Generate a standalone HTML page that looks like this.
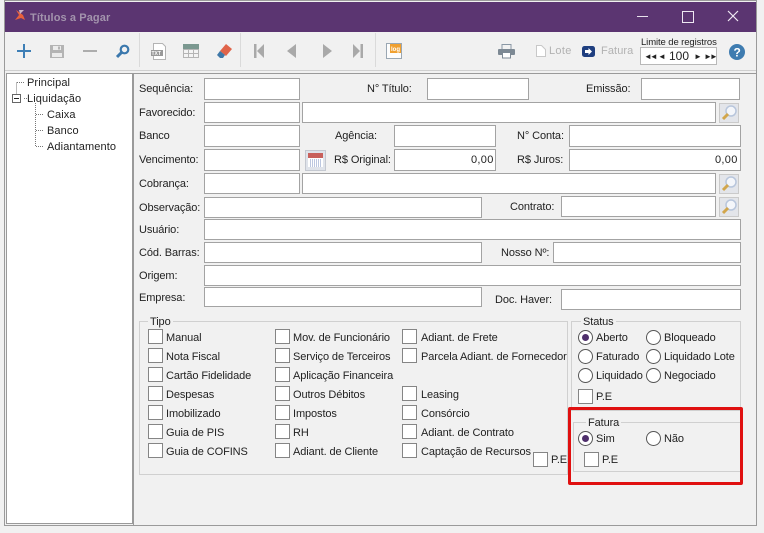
<!DOCTYPE html>
<html lang="pt"><head><meta charset="utf-8"><title>Títulos a Pagar</title>
<style>
html,body{margin:0;padding:0;background:#f1f1f1}
#r{position:relative;width:764px;height:533px;overflow:hidden;background:#f1f1f1;font:11px/14px "Liberation Sans","DejaVu Sans",sans-serif;color:#222}
#r div,#r span,#r svg{position:absolute}
.t{white-space:nowrap;letter-spacing:-.1px;margin-top:1px}
.f{background:#fff;border:1px solid #a3a3a3;box-sizing:border-box}
.c{width:15px;height:15px;background:#fff;border:1px solid #858585;box-sizing:border-box}
.o{width:15px;height:15px;background:#fff;border:1.3px solid #555;border-radius:50%;box-sizing:border-box}
.o.on:after{content:"";position:absolute;left:2.7px;top:2.7px;width:7px;height:7px;border-radius:50%;background:#4f2f6c}
.g{border:1px solid #d0d0d0;box-sizing:border-box}
.m{width:20px;height:20px;background:#e3e5ea;border:1px solid #cacaca;box-sizing:border-box}
.v{width:1px;background:#dadada}
</style></head><body><div id="r">
<div style="left:4px;top:0;width:753px;height:2px;background:#8f8f8f"></div>
<div style="left:4px;top:0;width:753px;height:526px;border:1px solid #9a9a9a;box-sizing:border-box;background:#f1f1f1"></div>
<div style="left:5px;top:2px;width:751px;height:30px;background:#5b3571"></div>
<svg style="left:14px;top:9px" width="12" height="12" viewBox="0 0 12 12"><path d="M2 1 L9 6 L11 11 L7 9 L1 11 L5 6 Z" fill="#e8603c"/><path d="M5 1h5L6 5z" fill="#c9b3c8"/></svg>
<div class="t" style="left:30px;top:10px;color:#a394ad;font-weight:bold;font-size:11px;letter-spacing:.1px">Títulos a Pagar</div>
<div style="left:637px;top:16px;width:11px;height:1px;background:#e8e2ec"></div>
<div style="left:682px;top:11px;width:10px;height:10px;border:1px solid #eee8f2"></div>
<svg style="left:727px;top:10px" width="12" height="12"><path d="M1 1L11 11M11 1L1 11" stroke="#f0eaf4" stroke-width="1.2"/></svg>

<!-- toolbar -->
<svg style="left:16px;top:43px" width="16" height="16"><path d="M8 1v14M1 8h14" stroke="#3e7fb6" stroke-width="2"/></svg>
<svg style="left:50px;top:45px" width="14" height="13"><path d="M0 0h14v13H0z" fill="#b4b4b4"/><path d="M3 1h8v4H3zM2 8h10v4H2z" fill="#ececec"/><path d="M8 1.500h2v3H8z" fill="#b4b4b4"/></svg>
<div style="left:83px;top:50px;width:14px;height:2px;background:#adadad"></div>
<svg style="left:115px;top:44px" width="15" height="15"><circle cx="9.500" cy="5.500" r="3.800" fill="none" stroke="#3b78ad" stroke-width="2.200"/><path d="M6.500 8.500L2 13" stroke="#3b78ad" stroke-width="3"/></svg>
<div class="v" style="left:139px;top:33px;height:34px"></div>
<svg style="left:150px;top:43px" width="17" height="17"><path d="M3.500 .5h9l3 3v13h-12z" fill="#fff" stroke="#b4b4b4"/><rect x="1" y="7" width="12" height="6" fill="#999"/><text x="1.500" y="12" font-size="5" fill="#fff" font-family="Liberation Sans" font-weight="bold">TXT</text></svg>
<svg style="left:183px;top:44px" width="16" height="14"><rect width="16" height="14" fill="#b5b5b5"/><rect width="16" height="5" fill="#7b9890"/><path d="M1 6h4v3H1zM6 6h4v3H6zM11 6h4v3h-4zM1 10h4v3H1zM6 10h4v3H6zM11 10h4v3h-4z" fill="#f4f4f4"/></svg>
<svg style="left:216px;top:44px" width="16" height="15"><path d="M10 0l6 5-6 7-6-5z" fill="#e0644a"/><path d="M4 7l5 4-2 3H4L1 11z" fill="#3f78a8"/></svg>
<div class="v" style="left:240px;top:33px;height:34px"></div>
<svg style="left:254px;top:44px" width="10" height="14" fill="#a9a9a9"><path d="M0 0h2.500v14H0zM10 0v14L3 7z"/></svg>
<svg style="left:287px;top:44px" width="9" height="14" fill="#a9a9a9"><path d="M9 0v14L0 7z"/></svg>
<svg style="left:323px;top:44px" width="9" height="14" fill="#a9a9a9"><path d="M0 0v14l9-7z"/></svg>
<svg style="left:353px;top:44px" width="10" height="14" fill="#a9a9a9"><path d="M7.500 0H10v14H7.500zM0 0v14l7-7z"/></svg>
<div class="v" style="left:375px;top:33px;height:34px"></div>
<svg style="left:386px;top:43px" width="16" height="16"><rect x=".5" y=".5" width="15" height="15" fill="#fdfdfd" stroke="#9aa7b3"/><rect x="4" y="1" width="11" height="9" fill="#f0a030"/><text x="5" y="8" font-size="6" fill="#fff" font-family="Liberation Sans" font-weight="bold">log</text></svg>
<svg style="left:498px;top:44px" width="17" height="15"><rect x="4" y=".5" width="9" height="5" fill="#f2f2f2" stroke="#8a98a5"/><rect x="0" y="5" width="17" height="6" rx="1" fill="#7d8994"/><rect x="4.500" y="8.500" width="8" height="5.500" fill="#fff" stroke="#7d8994"/></svg>
<svg style="left:536px;top:45px" width="10" height="12"><path d="M.5 .5h5l4 4v7H.5z" fill="#fff" stroke="#c8c8c8"/></svg>
<div class="t" style="left:549px;top:43px;color:#b2b2b2;letter-spacing:.3px">Lote</div>
<svg style="left:582px;top:46px" width="13" height="11"><rect width="13" height="11" rx="2.500" fill="#1f3f80"/><path d="M3 4h3.500V2l3.500 3.500L6.500 9V7H3z" fill="#fff"/></svg>
<div class="t" style="left:601px;top:43px;color:#b2b2b2;letter-spacing:.1px">Fatura</div>
<div class="t" style="left:641px;top:35px;font-size:9.500px;letter-spacing:-.1px">Limite de registros</div>
<div class="f" style="left:640px;top:47px;width:77px;height:18px;border-color:#b8b8b8"></div>
<div class="t" style="left:644px;top:49px;font-size:8px;letter-spacing:-2px">◄◄</div>
<div class="t" style="left:658px;top:49px;font-size:8px">◄</div>
<div class="t" style="left:669px;top:48px;font-size:12px;letter-spacing:0">100</div>
<div class="t" style="left:694px;top:49px;font-size:8px">►</div>
<div class="t" style="left:704px;top:49px;font-size:8px;letter-spacing:-2px">►►</div>
<svg style="left:729px;top:44px" width="16" height="16"><circle cx="8" cy="8" r="8" fill="#3f7cb0"/><text x="4.500" y="12.500" font-size="12" font-weight="bold" fill="#fff" font-family="Liberation Sans">?</text></svg>
<div style="left:5px;top:70px;width:751px;height:1px;background:#cfcfcf"></div>

<!-- tree -->
<div style="left:6px;top:73px;width:127px;height:451px;background:#fff;border:1px solid #9a9a9a;box-sizing:border-box"></div>
<svg style="left:7px;top:75px" width="60" height="80"><path d="M9.500 7.500V19M10 7.500h8M17 23.500h3M28.500 28V71M29 39.500h8M29 55.500h8M29 71.500h8" stroke="#777" stroke-dasharray="1 1" fill="none"/><rect x="5.500" y="19.500" width="8" height="8" fill="#fff" stroke="#666"/><path d="M7 23.500h5" stroke="#222"/></svg>
<div class="t" style="left:27px;top:75px;letter-spacing:.1px">Principal</div>
<div class="t" style="left:27px;top:91px;letter-spacing:.1px">Liquidação</div>
<div class="t" style="left:47px;top:107px;letter-spacing:.1px">Caixa</div>
<div class="t" style="left:47px;top:123px;letter-spacing:.1px">Banco</div>
<div class="t" style="left:47px;top:139px;letter-spacing:.1px">Adiantamento</div>

<!-- panel -->
<div style="left:133px;top:73px;width:624px;height:453px;border:1px solid #9a9a9a;box-sizing:border-box;background:#f1f1f1"></div>

<div class="t" style="left:139px;top:81px">Sequência:</div><div class="f" style="left:204px;top:78px;width:96px;height:22px"></div>
<div class="t" style="left:367px;top:81px">N° Título:</div><div class="f" style="left:427px;top:78px;width:102px;height:22px"></div>
<div class="t" style="left:586px;top:81px">Emissão:</div><div class="f" style="left:641px;top:78px;width:99px;height:22px"></div>

<div class="t" style="left:139px;top:105px">Favorecido:</div><div class="f" style="left:204px;top:102px;width:96px;height:21px"></div>
<div class="f" style="left:302px;top:102px;width:414px;height:21px"></div>

<div class="t" style="left:139px;top:128px">Banco</div><div class="f" style="left:204px;top:125px;width:96px;height:22px"></div>
<div class="t" style="left:335px;top:128px">Agência:</div><div class="f" style="left:394px;top:125px;width:102px;height:22px"></div>
<div class="t" style="left:517px;top:128px">N° Conta:</div><div class="f" style="left:569px;top:125px;width:172px;height:22px"></div>

<div class="t" style="left:139px;top:152px">Vencimento:</div><div class="f" style="left:204px;top:149px;width:96px;height:22px"></div>
<div style="left:305px;top:150px;width:21px;height:21px;background:#dfe3ea;border:1px solid #c4c8d0;box-sizing:border-box"></div>
<svg style="left:308px;top:153px" width="15" height="14"><rect width="15" height="14" fill="#fff"/><rect width="15" height="5" fill="#c8605c"/><path d="M2 7h11M2 9h11M2 11h11M2 13h11" stroke="#7a8fc0" stroke-dasharray="1 1"/></svg>
<div class="t" style="left:334px;top:152px">R$ Original:</div><div class="f" style="left:394px;top:149px;width:102px;height:22px"></div>
<div class="t" style="left:471px;top:152px;letter-spacing:.3px">0,00</div>
<div class="t" style="left:517px;top:152px">R$ Juros:</div><div class="f" style="left:569px;top:149px;width:172px;height:22px"></div>
<div class="t" style="left:715px;top:152px;letter-spacing:.3px">0,00</div>

<div class="t" style="left:139px;top:176px">Cobrança:</div><div class="f" style="left:204px;top:173px;width:96px;height:21px"></div>
<div class="f" style="left:302px;top:173px;width:414px;height:21px"></div>

<div class="t" style="left:139px;top:200px">Observação:</div><div class="f" style="left:204px;top:197px;width:278px;height:21px"></div>
<div class="t" style="left:510px;top:199px">Contrato:</div><div class="f" style="left:561px;top:196px;width:155px;height:21px"></div>

<div class="t" style="left:139px;top:222px">Usuário:</div><div class="f" style="left:204px;top:219px;width:537px;height:21px"></div>

<div class="t" style="left:139px;top:245px">Cód. Barras:</div><div class="f" style="left:204px;top:242px;width:278px;height:21px"></div>
<div class="t" style="left:501px;top:245px">Nosso Nº:</div><div class="f" style="left:553px;top:242px;width:188px;height:21px"></div>

<div class="t" style="left:139px;top:268px">Origem:</div><div class="f" style="left:204px;top:265px;width:537px;height:21px"></div>

<div class="t" style="left:139px;top:290px">Empresa:</div><div class="f" style="left:204px;top:287px;width:278px;height:20px"></div>
<div class="t" style="left:495px;top:292px">Doc. Haver:</div><div class="f" style="left:561px;top:289px;width:180px;height:21px"></div>

<!-- magnifier buttons -->
<div class="m" style="left:719px;top:103px"></div>
<svg style="left:720px;top:104px" width="18" height="18"><circle cx="11" cy="7" r="5" fill="#f4f6fa" stroke="#b8c6dc" stroke-width="1.500"/><path d="M8 10L3 15" stroke="#d2a64c" stroke-width="3"/></svg>
<div class="m" style="left:719px;top:174px"></div>
<svg style="left:720px;top:175px" width="18" height="18"><circle cx="11" cy="7" r="5" fill="#f4f6fa" stroke="#b8c6dc" stroke-width="1.500"/><path d="M8 10L3 15" stroke="#d2a64c" stroke-width="3"/></svg>
<div class="m" style="left:719px;top:197px"></div>
<svg style="left:720px;top:198px" width="18" height="18"><circle cx="11" cy="7" r="5" fill="#f4f6fa" stroke="#b8c6dc" stroke-width="1.500"/><path d="M8 10L3 15" stroke="#d2a64c" stroke-width="3"/></svg>

<!-- Tipo -->
<div class="g" style="left:139px;top:321px;width:429px;height:154px"></div>
<div class="t" style="left:149px;top:314px;background:#f1f1f1;padding:0 2px 0 2px;margin-left:-1px">Tipo</div>
<div class="c" style="left:148px;top:329px"></div><div class="t" style="left:166px;top:330px">Manual</div>
<div class="c" style="left:148px;top:348px"></div><div class="t" style="left:166px;top:349px">Nota Fiscal</div>
<div class="c" style="left:148px;top:367px"></div><div class="t" style="left:166px;top:368px">Cartão Fidelidade</div>
<div class="c" style="left:148px;top:386px"></div><div class="t" style="left:166px;top:387px">Despesas</div>
<div class="c" style="left:148px;top:405px"></div><div class="t" style="left:166px;top:406px">Imobilizado</div>
<div class="c" style="left:148px;top:424px"></div><div class="t" style="left:166px;top:425px">Guia de PIS</div>
<div class="c" style="left:148px;top:443px"></div><div class="t" style="left:166px;top:444px">Guia de COFINS</div>

<div class="c" style="left:275px;top:329px"></div><div class="t" style="left:293px;top:330px">Mov. de Funcionário</div>
<div class="c" style="left:275px;top:348px"></div><div class="t" style="left:293px;top:349px">Serviço de Terceiros</div>
<div class="c" style="left:275px;top:367px"></div><div class="t" style="left:293px;top:368px">Aplicação Financeira</div>
<div class="c" style="left:275px;top:386px"></div><div class="t" style="left:293px;top:387px">Outros Débitos</div>
<div class="c" style="left:275px;top:405px"></div><div class="t" style="left:293px;top:406px">Impostos</div>
<div class="c" style="left:275px;top:424px"></div><div class="t" style="left:293px;top:425px">RH</div>
<div class="c" style="left:275px;top:443px"></div><div class="t" style="left:293px;top:444px">Adiant. de Cliente</div>

<div class="c" style="left:402px;top:329px"></div><div class="t" style="left:421px;top:330px">Adiant. de Frete</div>
<div class="c" style="left:402px;top:348px"></div><div class="t" style="left:421px;top:349px">Parcela Adiant. de Fornecedor</div>
<div class="c" style="left:402px;top:386px"></div><div class="t" style="left:421px;top:387px">Leasing</div>
<div class="c" style="left:402px;top:405px"></div><div class="t" style="left:421px;top:406px">Consórcio</div>
<div class="c" style="left:402px;top:424px"></div><div class="t" style="left:421px;top:425px">Adiant. de Contrato</div>
<div class="c" style="left:402px;top:443px"></div><div class="t" style="left:421px;top:444px">Captação de Recursos</div>
<div class="c" style="left:533px;top:452px"></div><div class="t" style="left:551px;top:452px">P.E</div>

<!-- Status -->
<div class="g" style="left:571px;top:321px;width:170px;height:90px"></div>
<div class="t" style="left:581px;top:314px;background:#f1f1f1;padding:0 2px">Status</div>
<div class="o on" style="left:578px;top:330px"></div><div class="t" style="left:596px;top:330px">Aberto</div>
<div class="o" style="left:646px;top:330px"></div><div class="t" style="left:664px;top:330px">Bloqueado</div>
<div class="o" style="left:578px;top:349px"></div><div class="t" style="left:596px;top:349px">Faturado</div>
<div class="o" style="left:646px;top:349px"></div><div class="t" style="left:664px;top:349px">Liquidado Lote</div>
<div class="o" style="left:578px;top:368px"></div><div class="t" style="left:596px;top:368px">Liquidado</div>
<div class="o" style="left:646px;top:368px"></div><div class="t" style="left:664px;top:368px">Negociado</div>
<div class="c" style="left:578px;top:389px"></div><div class="t" style="left:596px;top:389px">P.E</div>

<!-- Fatura -->
<div class="g" style="left:573px;top:422px;width:168px;height:50px"></div>
<div class="t" style="left:586px;top:415px;background:#f1f1f1;padding:0 2px">Fatura</div>
<div class="o on" style="left:578px;top:431px"></div><div class="t" style="left:596px;top:431px">Sim</div>
<div class="o" style="left:646px;top:431px"></div><div class="t" style="left:664px;top:431px">Não</div>
<div class="c" style="left:584px;top:452px"></div><div class="t" style="left:602px;top:452px">P.E</div>
<div style="left:568px;top:407px;width:175px;height:78px;border:3px solid #e01010;border-radius:2px;box-sizing:border-box"></div>
</div></body></html>
